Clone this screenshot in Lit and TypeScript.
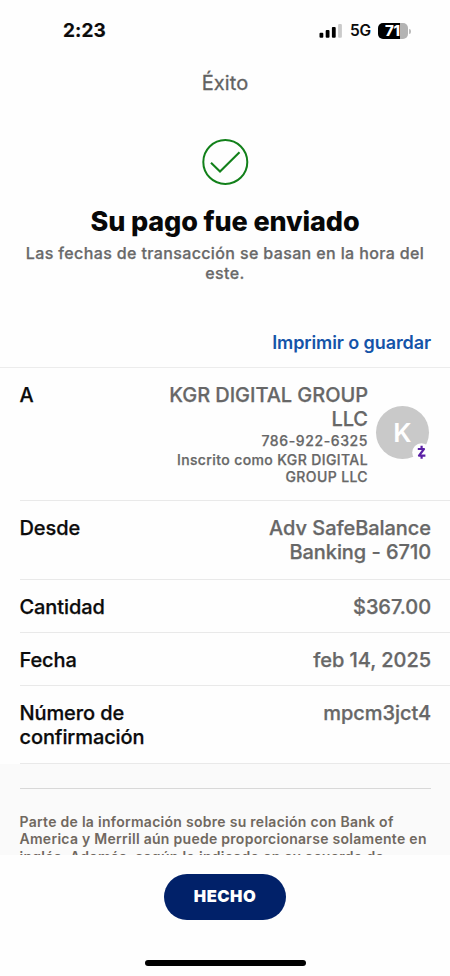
import { LitElement, html, css } from "lit";
import { customElement } from "lit/decorators.js";

@customElement("status-bar")
class StatusBar extends LitElement {
  static styles = css`
    :host { display: flex; height: 62px; align-items: center; box-sizing: border-box; padding: 0 39px 0 63px; justify-content: space-between; }
    .time { font-size: 19px; font-weight: 700; letter-spacing: 0.1px; line-height: 20px; -webkit-text-stroke: 0.2px; }
    .right { display: flex; align-items: center; }
    .signal { display: block; margin-right: 7px; }
    .net { font-size: 15.5px; font-weight: 600; letter-spacing: -0.2px; line-height: 20px; margin-right: 7px; }
    .battery { display: grid; grid-template-columns: 30px 3px; align-items: center; }
    .cell { height: 16px; border-radius: 5px; background: linear-gradient(90deg, #000 0 72%, #b3b3b3 72%); color: #fff; font-size: 15px; line-height: 16px; font-weight: 800; text-align: center; letter-spacing: -0.3px; padding-right: 1px; box-sizing: border-box; }
    .tip { width: 1.5px; height: 5px; margin-left: 1px; background: #bbb; border-radius: 0 2px 2px 0; }
  `;
  render() {
    return html`
      <span class="time">2:23</span>
      <div class="right">
        <svg class="signal" width="24" height="15" viewBox="0 0 24 15">
          <rect x="0.5" y="8.8" width="3.8" height="5" rx="1" />
          <rect x="6.7" y="5.9" width="3.8" height="7.9" rx="1" />
          <rect x="12.9" y="2.9" width="3.8" height="10.9" rx="1" />
          <rect x="19.1" y="0" width="3.8" height="13.8" rx="1" fill="#cacaca" />
        </svg>
        <span class="net">5G</span>
        <div class="battery"><div class="cell">71</div><div class="tip"></div></div>
      </div>
    `;
  }
}

@customElement("app-root")
class AppRoot extends LitElement {
  static styles = css`
    :host { display: flex; flex-direction: column; width: 450px; height: 976px; overflow: hidden; background: #fefefe; color: #0b0b0b; font-family: Inter, "Liberation Sans", sans-serif; }
    .title { margin: 9px 0 0; height: 24px; line-height: 24px; font-size: 20px; font-weight: 400; color: #626262; -webkit-text-stroke: 0.3px; text-align: center; letter-spacing: 0.1px; }
    .check { display: block; margin: 43px auto 0; }
    h1 { margin: 19px 0 0; font-size: 27px; line-height: 34px; font-weight: 800; text-align: center; letter-spacing: -0.12px; color: #080808; }
    .note { margin: 4px 0 0; text-align: center; font-size: 16px; line-height: 20px; font-weight: 500; color: #696969; letter-spacing: 0.37px; -webkit-text-stroke: 0.25px; }
    .print { margin: 48px 19px 0 0; text-align: right; font-size: 18px; line-height: 24px; font-weight: 600; color: #1453a8; height: 24px; letter-spacing: -0.1px; }
    .rows { margin-top: 12px; border-top: 1px solid #ececec; }
    .row { display: flex; justify-content: space-between; box-sizing: border-box; margin-left: 19.5px; padding: 15px 19px 0 0; border-bottom: 1px solid #e9e9e9; font-size: 20px; line-height: 24px; font-weight: 500; }
    .h133 { height: 133px; }
    .h79 { height: 79px; }
    .h53 { height: 53px; }
    .h77 { height: 77.5px; }
    .val { text-align: right; color: #676767; white-space: nowrap; letter-spacing: -0.05px; -webkit-text-stroke: 0.25px; }
    .label { white-space: nowrap; letter-spacing: -0.1px; -webkit-text-stroke: 0.25px; }
    .payee { display: flex; gap: 8px; }
    .small { font-size: 14px; line-height: 17px; letter-spacing: 0.39px; }
    .phone { line-height: 20px; letter-spacing: 0.6px; }
    .avatar { position: relative; width: 53px; height: 53px; margin-top: 23px; margin-right: 2px; border-radius: 50%; background: #c9c9c9; color: #fff; font-size: 26px; line-height: 53px; text-align: center; font-weight: 600; }
    .badge { position: absolute; left: 36px; top: 37px; }
    .legal { height: 91px; overflow: hidden; background: #fafafa; box-sizing: border-box; padding: 24px 19px 0 19.5px; }
    .legal p { margin: 0; border-top: 1px solid #d8d8d8; padding-top: 24.5px; font-size: 14px; line-height: 17.3px; font-weight: 600; color: #70685f; white-space: nowrap; letter-spacing: 0.28px; }
    .done { display: block; margin: 19px auto 0; width: 122px; height: 46px; border: 0; border-radius: 23px; background: #012169; color: #fff; font: 900 16.5px/45px Inter, sans-serif; letter-spacing: 0.5px; padding: 0; }
    .home { width: 161px; height: 6px; border-radius: 3px; background: #000; margin: 40px auto 0; }
  `;
  render() {
    return html`
      <status-bar></status-bar>
      <div class="title">Éxito</div>
      <svg class="check" width="48" height="48" viewBox="0 0 48 48" fill="none" stroke="#12801a" stroke-width="2">
        <circle cx="24.3" cy="24" r="22" />
        <path d="M10 24.8 19 33.5 38.5 14.3" stroke-width="2.1" />
      </svg>
      <h1>Su pago fue enviado</h1>
      <p class="note">Las fechas de transacción se basan en la hora del<br />este.</p>
      <div class="print">Imprimir o guardar</div>
      <div class="rows">
        <div class="row h133">
          <div class="label">A</div>
          <div class="payee">
            <div class="val">
              <div class="name">KGR DIGITAL GROUP<br />LLC</div>
              <div class="small phone">786-922-6325</div>
              <div class="small">Inscrito como KGR DIGITAL<br />GROUP LLC</div>
            </div>
            <div class="avatar">K
              <svg class="badge" width="19" height="19" viewBox="0 0 19 19">
                <circle cx="9.5" cy="9.5" r="9.3" fill="#fefefe" />
                <path d="M5.8 6H12L7 12.6H13.4M9.6 2.8V6M9.6 12.6V15.8" fill="none" stroke="#5a20a5" stroke-width="2.2" stroke-linejoin="round" />
              </svg>
            </div>
          </div>
        </div>
        <div class="row h79"><div class="label">Desde</div><div class="val">Adv SafeBalance<br />Banking - 6710</div></div>
        <div class="row h53"><div class="label">Cantidad</div><div class="val">$367.00</div></div>
        <div class="row h53"><div class="label">Fecha</div><div class="val">feb 14, 2025</div></div>
        <div class="row h77"><div class="label">Número de<br />confirmación</div><div class="val">mpcm3jct4</div></div>
      </div>
      <div class="legal"><p>Parte de la información sobre su relación con Bank of<br />America y Merrill aún puede proporcionarse solamente en<br />inglés. Además, según lo indicado en su acuerdo de</p></div>
      <button class="done">HECHO</button>
      <div class="home"></div>
    `;
  }
}
